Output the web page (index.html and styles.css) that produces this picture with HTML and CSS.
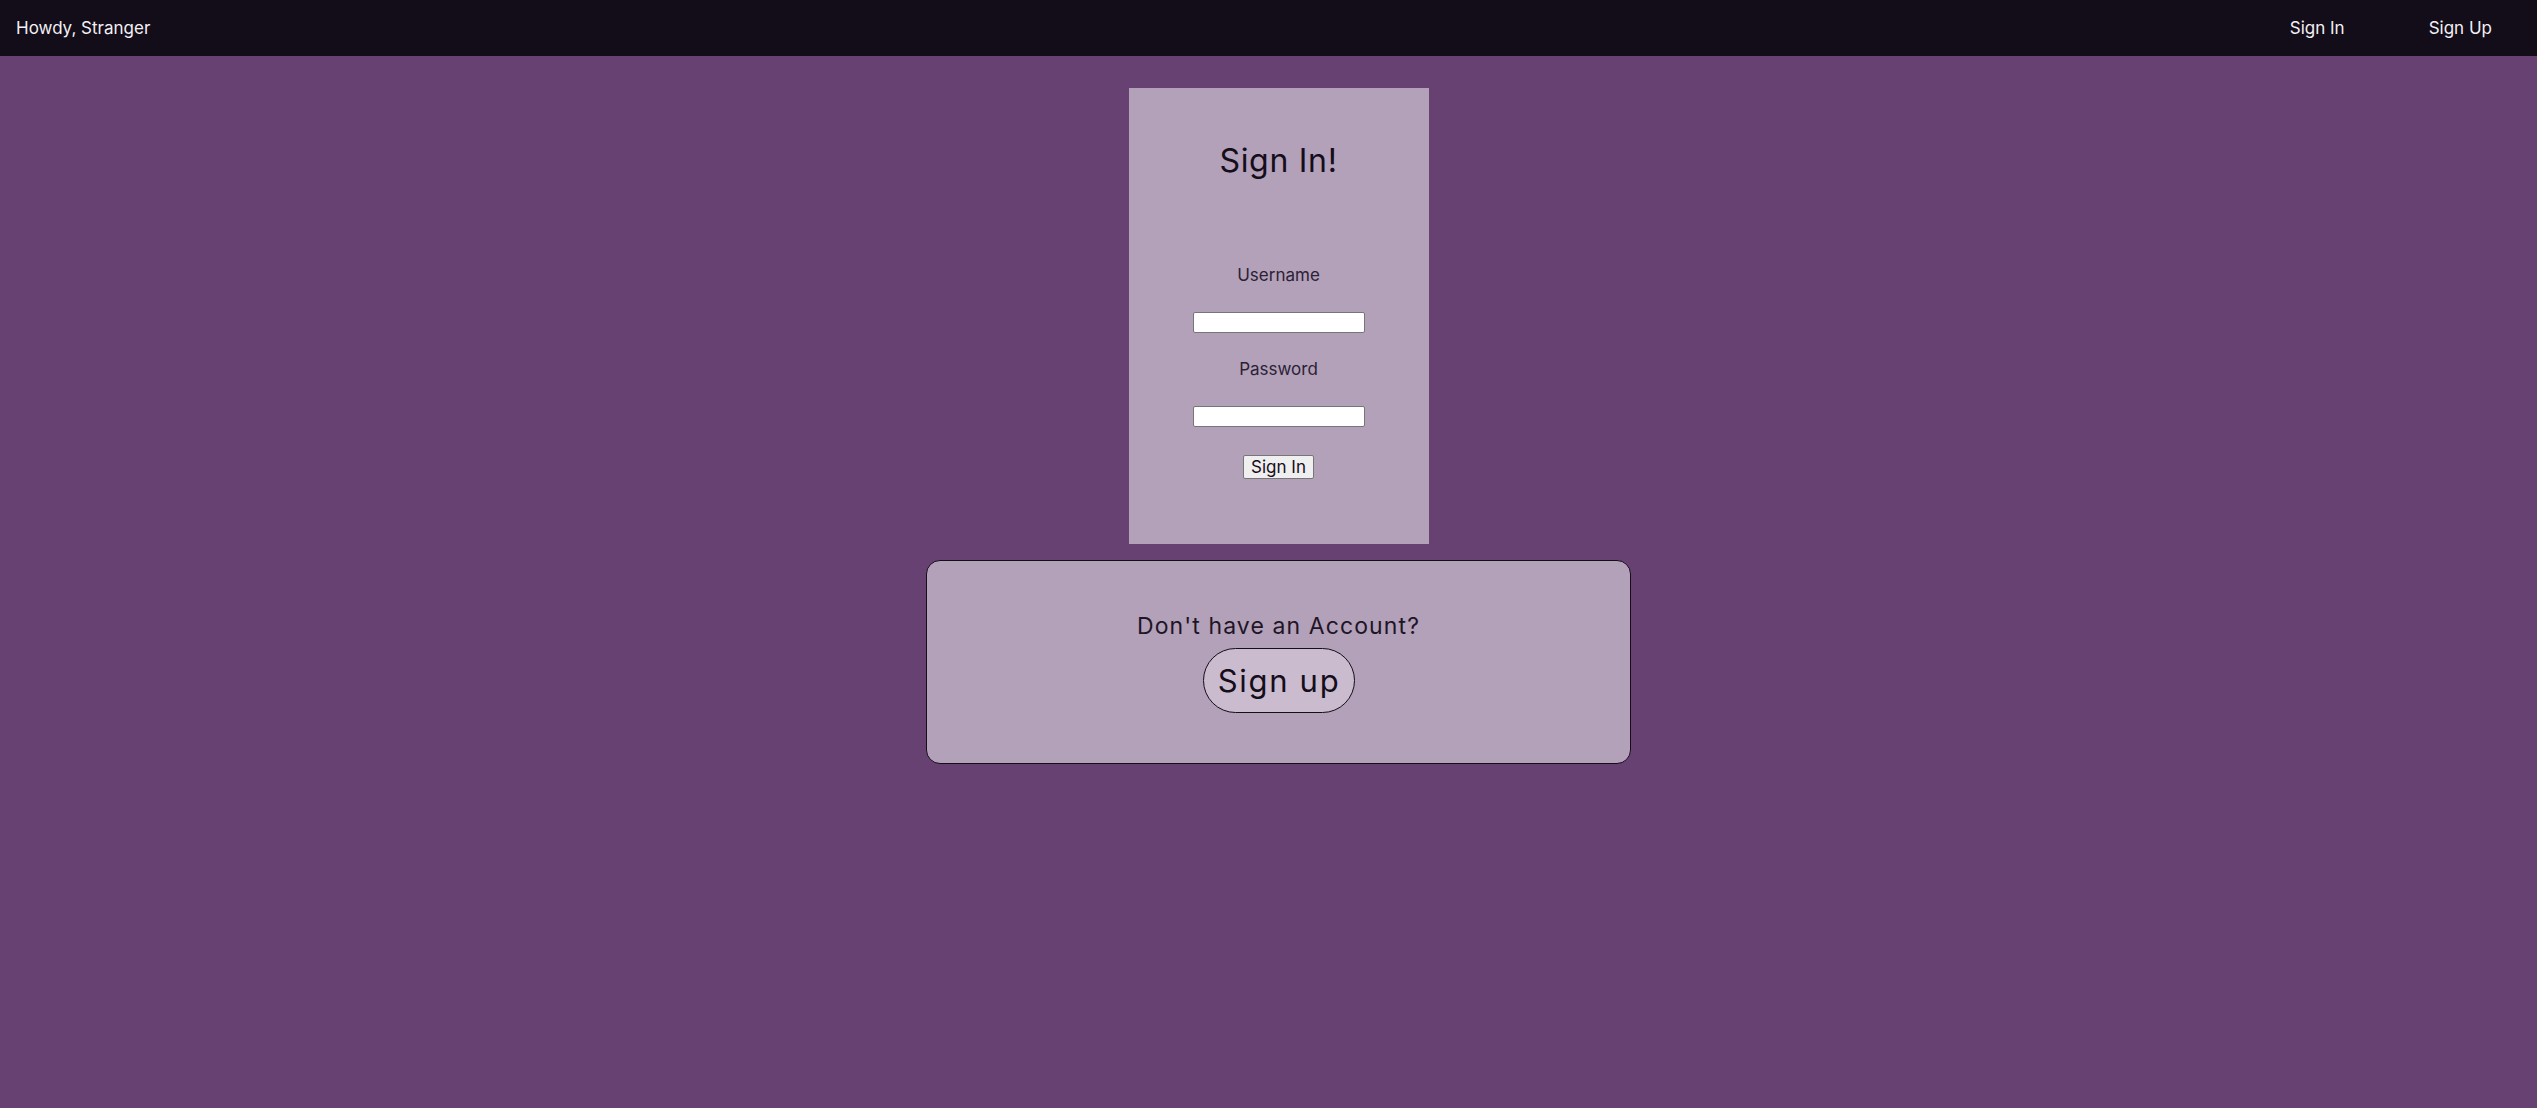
FILE: index.html
```html
<!DOCTYPE html>
<html lang="en">
<head>
<meta charset="utf-8">
<title>Sign In</title>
<link rel="stylesheet" href="styles.css">
</head>
<body>
<nav class="topbar">
  <span class="greeting">Howdy, Stranger</span>
  <div class="nav-links">
    <a class="nav-link" href="#">Sign In</a>
    <a class="nav-link" href="#">Sign Up</a>
  </div>
</nav>
<main class="page">
  <form class="signin-card">
    <h1 class="signin-title">Sign In!</h1>
    <label class="field-label" for="username">Username</label>
    <input class="field-input" id="username" type="text">
    <label class="field-label" for="password">Password</label>
    <input class="field-input" id="password" type="password">
    <button class="submit-btn" type="button">Sign In</button>
  </form>
  <section class="signup-card">
    <p class="signup-text">Don't have an Account?</p>
    <button class="signup-btn" type="button">Sign up</button>
  </section>
</main>
</body>
</html>
```

FILE: styles.css
```css
* { box-sizing: border-box; }

html, body {
  margin: 0;
  padding: 0;
}

body {
  background: #674172;
  font-family: Inter, "Noto Sans", sans-serif;
  min-height: 1108px;
}

.topbar {
  height: 56px;
  background: #130c19;
  display: flex;
  align-items: center;
  justify-content: space-between;
  padding: 0 45px 0 16px;
  color: #f2f0f4;
  font-size: 17px;
}

.greeting {
  line-height: 24px;
}

.nav-links {
  display: flex;
  gap: 84px;
}

.nav-link {
  color: #f2f0f4;
  text-decoration: none;
  line-height: 24px;
}

.page {
  display: flex;
  flex-direction: column;
  align-items: center;
  padding: 32px 0 0 20px;
}

.signin-card {
  width: 300px;
  height: 456px;
  background: rgba(255, 255, 255, 0.5);
  display: flex;
  flex-direction: column;
  align-items: center;
  padding-top: 53px;
}

.signin-title {
  margin: 0 0 82px;
  font-size: 32px;
  font-weight: 400;
  line-height: 40px;
  letter-spacing: 0.7px;
  color: #140d1a;
}

.field-label {
  font-size: 17px;
  line-height: 24px;
  color: #2b2235;
  margin-bottom: 25px;
}

.field-input {
  width: 172px;
  height: 21px;
  border: 1px solid #767676;
  border-radius: 2px;
  background: #fff;
  margin-bottom: 24px;
}

.field-input + .field-label + .field-input {
  margin-bottom: 28px;
}

.submit-btn {
  width: 71px;
  height: 24px;
  padding: 0;
  font-family: inherit;
  font-size: 17px;
  line-height: 22px;
  color: #140d1a;
  background: #efefef;
  border: 1px solid #767676;
  border-radius: 2px;
}

.signup-card {
  margin-top: 16px;
  width: 705px;
  height: 204px;
  border: 1px solid #140d1a;
  border-radius: 14px;
  background: rgba(255, 255, 255, 0.5);
  display: flex;
  flex-direction: column;
  align-items: center;
  padding-top: 50px;
}

.signup-text {
  margin: 0 0 7px;
  font-size: 23px;
  line-height: 30px;
  letter-spacing: 1.1px;
  color: #1e1526;
}

.signup-btn {
  width: 152px;
  height: 65px;
  padding: 0 0 0 1px;
  font-family: inherit;
  font-size: 31px;
  line-height: 63px;
  letter-spacing: 1.7px;
  color: #140d1a;
  background: rgba(255, 255, 255, 0.3);
  border: 1px solid #140d1a;
  border-radius: 33px;
}
```
